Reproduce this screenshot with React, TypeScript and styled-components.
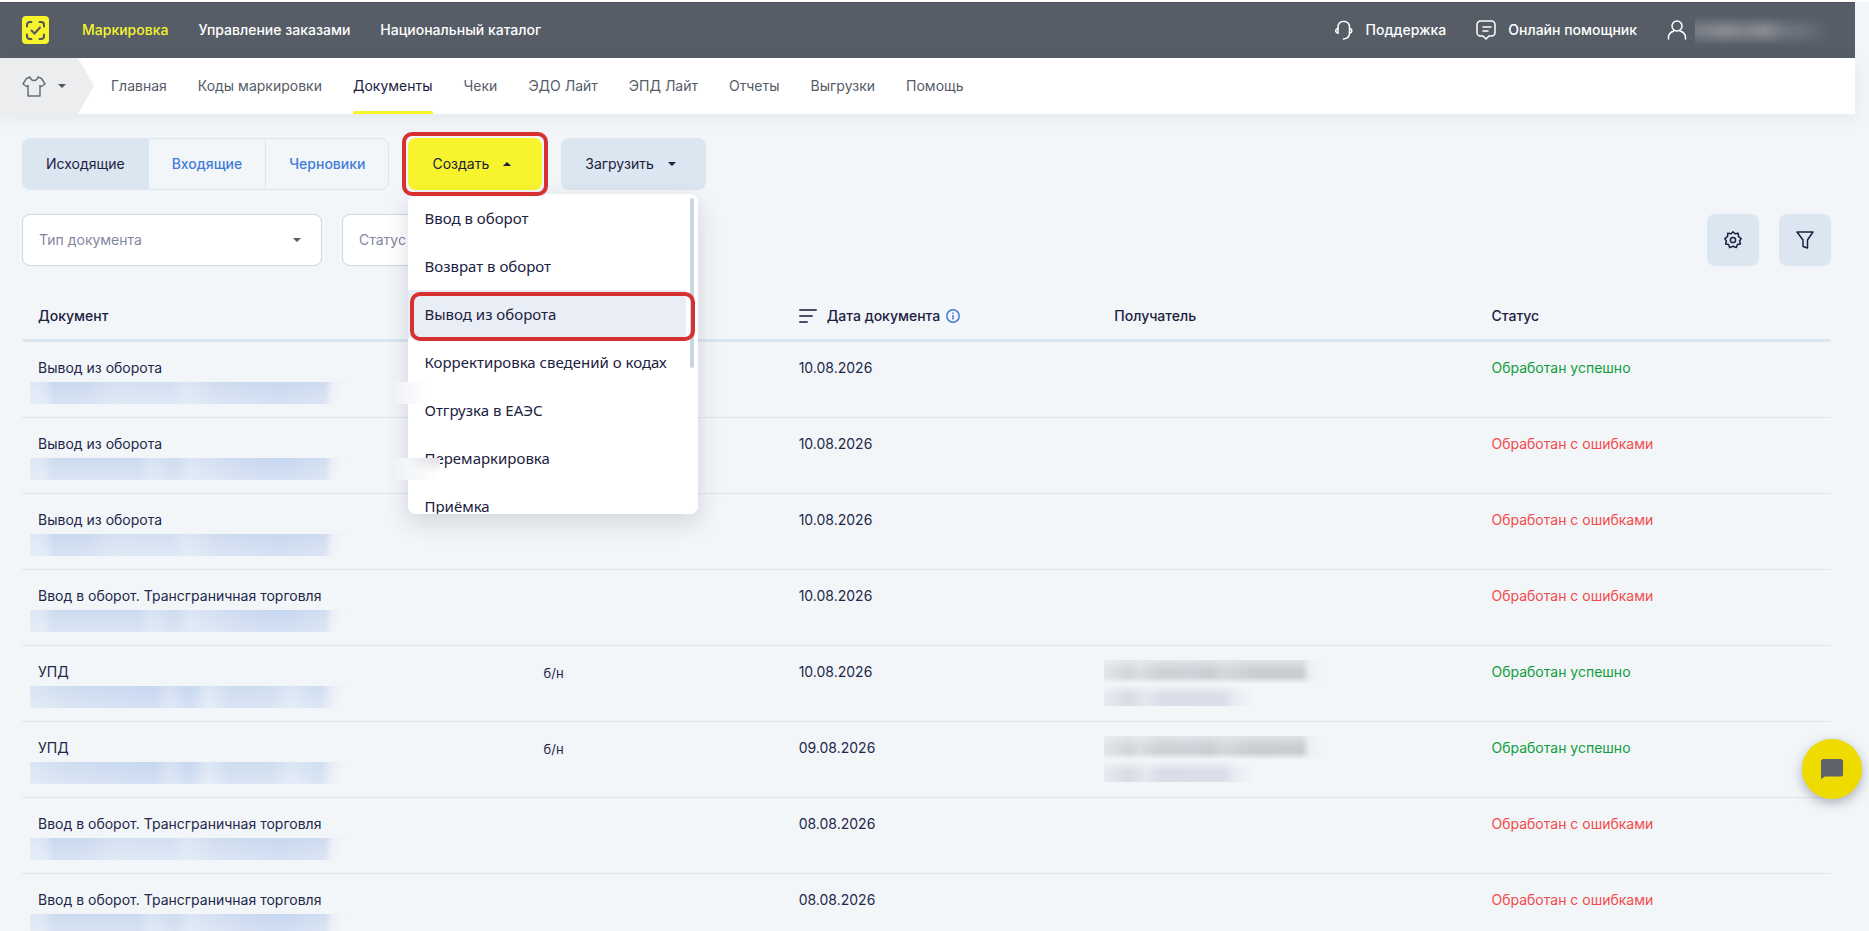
import React from "react";
import styled, { createGlobalStyle } from "styled-components";

const ink = "#1b2140";
const blue = "#dce6f0";
const page = "#f2f6f9";
const yellow = "#f7f42d";
const link = "#437cd6";
const mark = "#d73030";

const Global = createGlobalStyle`
  *, *::before, *::after { box-sizing: border-box; }
  html, body { margin: 0; height: 100%; overflow: hidden; background: ${page}; }
  body, button, select, input { font-family: Inter, "Liberation Sans", sans-serif; font-size: 14px; line-height: 20px; color: ${ink}; }
  button { border: 0; padding: 0; background: none; cursor: pointer; }
  a { color: inherit; text-decoration: none; }
  svg { display: block; flex: none; }
`;

const Shell = styled.div`
  height: 100vh;
  overflow: hidden;
  padding-right: 14px;
  border-top: 2px solid #fff;
`;

const TopBar = styled.header`
  display: flex;
  align-items: center;
  height: 56px;
  padding: 0 20px 0 22px;
  background: #565d67;
  box-shadow: inset 0 1px #4b5060;
  color: #fff;
`;

const Logo = styled.a`
  display: grid;
  place-items: center;
  width: 27px;
  height: 28px;
  margin-right: 33px;
  border-radius: 4px;
  background: ${yellow};
`;

const TopLinks = styled.nav`
  display: flex;
  flex: 1;
  gap: 30px;
  font-weight: 500;
`;

const TopLink = styled.a<{ $active?: boolean }>`
  color: ${(p) => (p.$active ? yellow : "#fff")};
`;

const Tools = styled.div`
  display: flex;
  align-items: center;
  gap: 30px;
  font-weight: 500;
`;

const Tool = styled.a`
  display: flex;
  align-items: center;
  gap: 12px;
`;

const HiddenName = styled.span`
  width: 140px;
  height: 34px;
  margin-left: -4px;
  background:
    linear-gradient(180deg, #565d67 8%, rgba(86, 93, 103, 0) 45%, rgba(86, 93, 103, 0) 60%, #565d67 96%),
    linear-gradient(90deg, #767b84 0, #858990 30px, #7c8089 48px, #858990 70px, #6f757e 90px, #686e78 110px, #565d67 136px);
`;

const SubBar = styled.div`
  display: flex;
  height: 56px;
  background: #fff;
  box-shadow: 0 4px 16px rgba(60, 70, 80, 0.08);
`;

const Category = styled.button`
  display: flex;
  align-items: center;
  gap: 12px;
  width: 94px;
  padding-left: 22px;
  background: #ebedef;
  clip-path: polygon(0 0, 78px 0, 94px 50%, 78px 100%, 0 100%);
`;

const SubLinks = styled.nav`
  display: flex;
  gap: 31px;
  padding-left: 17px;
  color: #555c68;
`;

const SubLink = styled.a<{ $active?: boolean }>`
  display: flex;
  align-items: center;
  position: relative;
  color: ${(p) => (p.$active ? ink : "inherit")};
  &::after {
    content: "";
    display: ${(p) => (p.$active ? "block" : "none")};
    position: absolute;
    inset: auto 0 0;
    height: 3px;
    border-radius: 2px 2px 0 0;
    background: ${yellow};
  }
`;

const Content = styled.main`
  padding: 24px 24px 0 22px;
`;

const Actions = styled.div`
  display: flex;
  gap: 19px;
`;

const Tabs = styled.div`
  display: flex;
  height: 52px;
  border: 1px solid ${blue};
  border-radius: 8px;
  overflow: hidden;
`;

const Tab = styled.button<{ $active?: boolean }>`
  padding: 0 23px;
  font-weight: ${(p) => (p.$active ? 400 : 500)};
  color: ${(p) => (p.$active ? ink : link)};
  background: ${(p) => (p.$active ? blue : "transparent")};
  & + & { border-left: 1px solid ${blue}; }
`;

const MenuAnchor = styled.div`
  position: relative;
`;

const ActionButton = styled.button<{ $primary?: boolean }>`
  display: flex;
  align-items: center;
  gap: 14px;
  height: 52px;
  padding: 0 ${(p) => (p.$primary ? 31 : 30)}px 0 24px;
  border-radius: 8px;
  background: ${(p) => (p.$primary ? yellow : blue)};
`;

const Highlight = styled.span<{ $inset: string }>`
  position: absolute;
  z-index: 1;
  inset: ${(p) => p.$inset};
  border: 4px solid ${mark};
  border-radius: 10px;
  pointer-events: none;
`;

const Menu = styled.div`
  position: absolute;
  z-index: 2;
  top: 56px;
  left: 0;
  width: 290px;
  height: 320px;
  overflow: hidden;
  border-radius: 8px;
  background: #fff;
`;

const MenuShadow = styled.div`
  position: absolute;
  z-index: 1;
  top: 56px;
  left: 0;
  width: 290px;
  height: 320px;
  border-radius: 8px;
  box-shadow: 0 8px 24px rgba(40, 40, 60, 0.16);
`;

const MenuList = styled.ul`
  width: 278px;
  margin: 0;
  padding: 0;
  list-style: none;
`;

const MenuEntry = styled.li`
  position: relative;
`;

const MenuItem = styled.button<{ $active?: boolean }>`
  width: 100%;
  height: 48px;
  padding: 0 16px;
  font-family: "Noto Sans", "Open Sans", sans-serif;
  font-size: 15px;
  text-align: left;
  white-space: nowrap;
  background: ${(p) => (p.$active ? "#e9eef6" : "transparent")};
`;

const Thumb = styled.span`
  position: absolute;
  top: 4px;
  right: 4px;
  width: 4px;
  height: 170px;
  border-radius: 2px;
  background: #c8d5e2;
`;

const Haze = styled.span<{ $top: number; $dark?: boolean }>`
  position: absolute;
  z-index: 3;
  top: ${(p) => p.$top}px;
  left: -14px;
  width: ${(p) => (p.$dark ? 46 : 32)}px;
  height: 22px;
  background:
    ${(p) => (p.$dark ? "radial-gradient(ellipse at 85% 0, #e2e2e4, rgba(255,255,255,0) 50%)," : "")}
    linear-gradient(90deg, #eff3f6, #f7f8fa 50%, #fff);
`;

const Filters = styled.div`
  display: flex;
  gap: 20px;
  margin-top: 24px;
`;

const SelectBox = styled.label`
  position: relative;
  display: flex;
  width: 300px;
  & > svg { position: absolute; right: 21px; top: 24px; pointer-events: none; }
`;

const Select = styled.select`
  width: 100%;
  height: 52px;
  padding: 0 16px;
  border: 1px solid #c8d5e2;
  border-radius: 8px;
  background: #fff;
  color: #83869f;
  appearance: none;
`;

const IconButton = styled.button<{ $push?: boolean }>`
  display: grid;
  place-items: center;
  width: 52px;
  height: 52px;
  margin-left: ${(p) => (p.$push ? "auto" : "0")};
  border-radius: 8px;
  background: ${blue};
`;

const Table = styled.table`
  width: 100%;
  margin-top: 24px;
  border-collapse: separate;
  border-spacing: 0;
  table-layout: fixed;
`;

const Head = styled.th<{ $w?: string }>`
  width: ${(p) => p.$w ?? "auto"};
  height: 52px;
  padding: 2px 16px 0;
  border-bottom: 3px solid ${blue};
  font-weight: 500;
  text-align: left;
`;

const SortLabel = styled.span`
  display: flex;
  align-items: center;
  gap: 6px;
  & > svg:first-child { margin-right: 4px; }
`;

const Cell = styled.td`
  height: 76px;
  padding: 16px 16px 0;
  border-bottom: 1px solid ${blue};
  color: #23284a;
  vertical-align: top;
`;

const DocNumber = styled.span`
  font-size: 13px;
  line-height: 22px;
`;

const Status = styled.span<{ $ok: boolean }>`
  color: ${(p) => (p.$ok ? "#0f9d3c" : "#f24a4a")};
`;

const HiddenNumber = styled.div<{ $v: number }>`
  width: 315px;
  height: 22px;
  margin: 4px 0 0 -8px;
  background:
    linear-gradient(180deg, rgba(255, 255, 255, 0), rgba(255, 255, 255, 0.25)),
    ${(p) =>
      p.$v === 0
        ? "linear-gradient(90deg, #dfe8f5 0, #dbe6f4 14px, #c9d9f0 24px, #cbdaef 54px, #d5e1f2 80px, #d3dff2 140px, #dce5f4 158px, #d0ddf0 185px, #c8d8f0 250px, #cfdcf0 295px, #ebeff6 302px, #f2f6f9 315px)"
        : p.$v === 1
          ? "linear-gradient(90deg, #dfe8f5 0, #dbe6f4 14px, #cddbf0 24px, #cddbf0 110px, #d9e4f3 120px, #cddcf0 145px, #dbe5f3 160px, #ccdaf0 210px, #c6d6f0 250px, #d1def1 295px, #ebeff6 302px, #f2f6f9 315px)"
          : "linear-gradient(90deg, #dae6f4 0, #cfddf0 36px, #c6d7f1 125px, #d6e1f2 140px, #c6d7f1 160px, #dde7f4 178px, #cddcf0 200px, #cfddf0 240px, #dce6f4 262px, #cdddf1 290px, #e9edf6 302px, #f2f6f9 315px)"};
`;

const HiddenRecipient = styled.div`
  width: 220px;
  height: 46px;
  margin: -2px 0 0 -10px;
  background:
    linear-gradient(180deg, rgba(242, 246, 249, 0.5), rgba(242, 246, 249, 0) 45%, rgba(242, 246, 249, 0) 70%, ${page}) 0 0 / 220px 24px no-repeat,
    linear-gradient(90deg, #e2e5e9 0, #d3d5da 24px, #dadde2 36px, #cfd1d6 56px, #d0d2d9 90px, #cbcdd2 105px, #d4d7dc 120px, #cacdd1 150px, #cbcdd2 198px, #ebeff3 206px, ${page} 220px) 0 0 / 220px 24px no-repeat,
    linear-gradient(180deg, ${page}, rgba(242, 246, 249, 0) 50%) 0 24px / 150px 22px no-repeat,
    linear-gradient(90deg, #e7eaef 0, #d9dce4 24px, #e5e8ef 42px, #dadde8 60px, #dcdfe9 120px, #e9ecf2 132px, ${page} 150px) 0 24px / 150px 22px no-repeat;
`;

const Chat = styled.button`
  position: fixed;
  right: 7px;
  bottom: 132px;
  display: grid;
  place-items: center;
  width: 60px;
  height: 60px;
  border-radius: 50%;
  background: #eedb00;
  box-shadow: 0 4px 12px rgba(40, 40, 60, 0.35);
`;

const Caret = ({ up = false, color = ink }: { up?: boolean; color?: string }) => (
  <svg width="8" height="4" viewBox="0 0 8 4">
    <path d={up ? "M0 4 3.4.4Q4 0 4.6.4L8 4Z" : "M0 0 3.4 3.6Q4 4 4.6 3.6L8 0Z"} fill={color} />
  </svg>
);

const topLinks = ["Маркировка", "Управление заказами", "Национальный каталог"];
const subLinks = ["Главная", "Коды маркировки", "Документы", "Чеки", "ЭДО Лайт", "ЭПД Лайт", "Отчеты", "Выгрузки", "Помощь"];
const menuItems = ["Ввод в оборот", "Возврат в оборот", "Вывод из оборота", "Корректировка сведений о кодах", "Отгрузка в ЕАЭС", "Перемаркировка", "Приёмка"];

const cross = "Ввод в оборот. Трансграничная торговля";
const rows = [
  { doc: "Вывод из оборота", date: "10.08.2026", ok: true, v: 0 },
  { doc: "Вывод из оборота", date: "10.08.2026", ok: false, v: 1 },
  { doc: "Вывод из оборота", date: "10.08.2026", ok: false, v: 0 },
  { doc: cross, date: "10.08.2026", ok: false, v: 1 },
  { doc: "УПД", date: "10.08.2026", ok: true, v: 2, num: "б/н" },
  { doc: "УПД", date: "09.08.2026", ok: true, v: 2, num: "б/н" },
  { doc: cross, date: "08.08.2026", ok: false, v: 0 },
  { doc: cross, date: "08.08.2026", ok: false, v: 1 },
];

export default function App() {
  return (
    <Shell>
      <Global />
      <TopBar>
        <Logo href="#" aria-label="Честный знак">
          <svg width="19" height="19" viewBox="0 0 19 19" fill="none" stroke="#50565f" strokeWidth="2" strokeLinecap="round">
            <path d="M1 5.500V4A3 3 0 0 1 4 1h1.500M13.500 1H15a3 3 0 0 1 3 3v1.500M18 13.500V15a3 3 0 0 1-3 3h-1.500M5.500 18H4a3 3 0 0 1-3-3v-1.500" />
            <path d="m5.500 9.500 3 3 5.500-6" />
          </svg>
        </Logo>
        <TopLinks>
          {topLinks.map((t, i) => (
            <TopLink key={t} href="#" $active={i === 0}>{t}</TopLink>
          ))}
        </TopLinks>
        <Tools>
          <Tool href="#">
            <svg width="20" height="20" viewBox="0 0 20 20" fill="none" stroke="#fff" strokeWidth="1.500" strokeLinecap="round">
              <path d="M4 13V6.500a5 5 0 0 1 5-5h1.500a5 5 0 0 1 5 5V13c0 3-1.500 5.500-6 6" />
              <path d="M4 8.500a2.200 2.200 0 1 0 0 4.500M15.500 8.500a2.200 2.200 0 0 1 0 4.500" />
            </svg>
            Поддержка
          </Tool>
          <Tool href="#">
            <svg width="20" height="20" viewBox="0 0 20 20" fill="none" stroke="#fff" strokeWidth="1.500" strokeLinecap="round" strokeLinejoin="round">
              <path d="M4.500 1h11A3.500 3.500 0 0 1 19 4.500v8a3.500 3.500 0 0 1-3.500 3.500H13l-3 3-3-3H4.500A3.500 3.500 0 0 1 1 12.500v-8A3.500 3.500 0 0 1 4.500 1Z" />
              <path d="M7 7h8M7 11h5" />
            </svg>
            Онлайн помощник
          </Tool>
          <Tool href="#" aria-label="Профиль">
            <svg width="20" height="20" viewBox="0 0 20 20" fill="none" stroke="#fff" strokeWidth="1.500" strokeLinecap="round">
              <circle cx="10" cy="6" r="5" />
              <path d="M1.500 19v-1.500c0-3 2-5.500 5.500-6.500M18.500 19v-1.500c0-3-2-5.500-5.500-6.500" />
            </svg>
            <HiddenName />
          </Tool>
        </Tools>
      </TopBar>
      <SubBar>
        <Category aria-label="Товарная группа">
          <svg width="24" height="21" viewBox="0 0 24 21" fill="none" stroke="#6b6f76" strokeWidth="1.500" strokeLinejoin="round">
            <path d="M8 1 4.500 2.500 1 8l3.500 2.500L6 9.500V20h12V9.500l1.500 1L23 8l-3.500-5.500L16 1c-.5 2-2 3.500-4 3.500S8.500 3 8 1Z" />
          </svg>
          <Caret color="#50565f" />
        </Category>
        <SubLinks>
          {subLinks.map((t, i) => (
            <SubLink key={t} href="#" $active={i === 2}>{t}</SubLink>
          ))}
        </SubLinks>
      </SubBar>
      <Content>
        <Actions>
          <Tabs>
            <Tab $active>Исходящие</Tab>
            <Tab>Входящие</Tab>
            <Tab>Черновики</Tab>
          </Tabs>
          <MenuAnchor>
            <ActionButton $primary aria-expanded="true">
              Создать <Caret up />
            </ActionButton>
            <MenuShadow />
            <Menu>
              <MenuList>
                {menuItems.map((t, i) => (
                  <MenuEntry key={t}>
                    <MenuItem $active={i === 2}>{t}</MenuItem>
                    {i === 2 && <Highlight $inset="2px -9px -3px 2px" />}
                  </MenuEntry>
                ))}
              </MenuList>
              <Thumb />
            </Menu>
            <Highlight $inset="-6px" style={{ zIndex: 4 }} />
            <Haze $top={244} />
            <Haze $top={320} $dark />
          </MenuAnchor>
          <ActionButton>
            Загрузить <Caret />
          </ActionButton>
        </Actions>
        <Filters>
          <SelectBox>
            <Select aria-label="Тип документа">
              <option>Тип документа</option>
            </Select>
            <Caret color="#5c5f6b" />
          </SelectBox>
          <SelectBox>
            <Select aria-label="Статус">
              <option>Статус</option>
            </Select>
            <Caret color="#5c5f6b" />
          </SelectBox>
          <IconButton $push aria-label="Настройки">
            <svg width="18" height="18" viewBox="0 0 18 18" fill="none" stroke={ink} strokeWidth="1.500" strokeLinejoin="round">
              <path d="M9 .8 11 2.700 14.200 2.300 14.500 5.600 17.200 7.600 15.600 10 16.400 13 13.400 13.500 12.300 16.600 9 15.200 5.700 16.600 4.600 13.500 1.600 13 2.400 10 .8 7.600 3.500 5.600 3.800 2.300 7 2.700Z" />
              <circle cx="9" cy="9" r="2.600" />
            </svg>
          </IconButton>
          <IconButton aria-label="Фильтр">
            <svg width="18" height="18" viewBox="0 0 18 18" fill="none" stroke={ink} strokeWidth="1.500" strokeLinejoin="round">
              <path d="M1 1h16l-5.500 8v8L7 15.500V9Z" />
            </svg>
          </IconButton>
        </Filters>
        <Table>
          <thead>
            <tr>
              <Head $w="27.95%">Документ</Head>
              <Head $w="14.1%" aria-label="Номер" />
              <Head $w="17.45%">
                <SortLabel>
                  <svg width="18" height="14" viewBox="0 0 18 14" stroke="#4a5166" strokeWidth="2" strokeLinecap="round">
                    <path d="M1 1h16M1 7h12M1 13h7" />
                  </svg>
                  Дата документа
                  <svg width="14" height="14" viewBox="0 0 14 14" fill="none" stroke={link} strokeWidth="1.500">
                    <circle cx="7" cy="7" r="6.200" />
                    <path d="M7 6v4.500M7 3.500V5" />
                  </svg>
                </SortLabel>
              </Head>
              <Head $w="20.85%">Получатель</Head>
              <Head>Статус</Head>
            </tr>
          </thead>
          <tbody>
            {rows.map((r, i) => (
              <tr key={i}>
                <Cell>
                  {r.doc}
                  <HiddenNumber $v={r.v} />
                </Cell>
                <Cell>{r.num && <DocNumber>{r.num}</DocNumber>}</Cell>
                <Cell>{r.date}</Cell>
                <Cell>{r.num && <HiddenRecipient />}</Cell>
                <Cell>
                  <Status $ok={r.ok}>{r.ok ? "Обработан успешно" : "Обработан с ошибками"}</Status>
                </Cell>
              </tr>
            ))}
          </tbody>
        </Table>
      </Content>
      <Chat aria-label="Чат">
        <svg width="22" height="20" viewBox="0 0 22 20" fill="#5f636b">
          <path d="M2.500 0h17A2.500 2.500 0 0 1 22 2.500v13a2 2 0 0 1-2 2H4L0 20V2.500A2.500 2.500 0 0 1 2.500 0Z" />
        </svg>
      </Chat>
    </Shell>
  );
}
